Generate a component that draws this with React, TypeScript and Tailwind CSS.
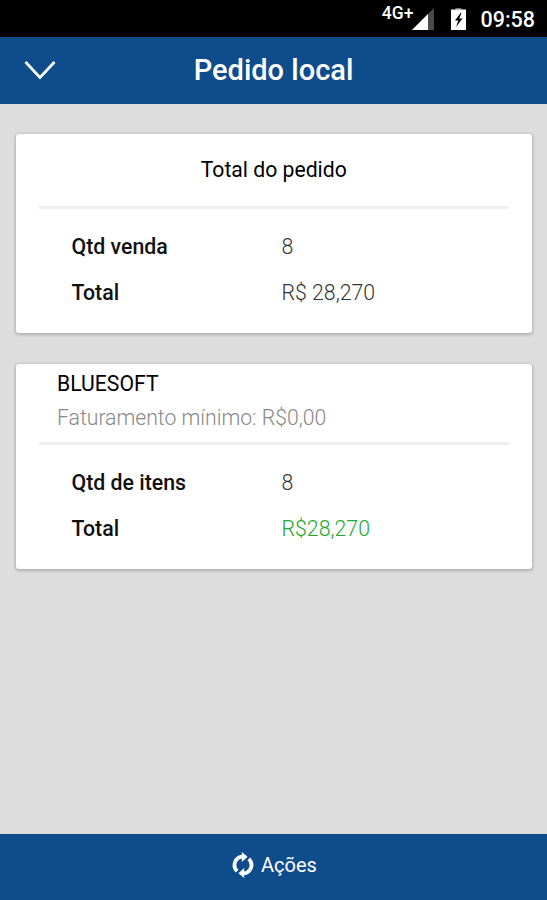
type Row = {
  label: string;
  value: string;
  valueClass: string;
};

const orderRows: Row[] = [
  { label: "Qtd venda", value: "8", valueClass: "text-[#333333]" },
  { label: "Total", value: "R$ 28,270", valueClass: "text-[#333333]" },
];

const supplierRows: Row[] = [
  { label: "Qtd de itens", value: "8", valueClass: "text-[#333333]" },
  { label: "Total", value: "R$28,270", valueClass: "text-[#22a62b]" },
];

function StatusBar() {
  return (
    <div className="flex h-[37px] shrink-0 items-center bg-black pr-3 text-white">
      <span className="ml-auto -mt-[10px] text-[17.5px] leading-none font-medium">4G+</span>
      <svg className="mt-[2px] -ml-[1px]" width="23" height="23" viewBox="0 0 23 23">
        <path d="M0 22 22 0V22Z" fill="#4a4a4a" />
        <path d="M0 22 16 6V22Z" fill="#fff" />
      </svg>
      <svg className="ml-[16px]" width="15" height="22" viewBox="0 0 15 22">
        <path d="M4.5 0H10.5V2H4.5Z" fill="#777" />
        <path d="M0 1.5H15V22H0Z" fill="#fff" />
        <path d="M9.5 5 4 12.5H7.3L5 19 11.5 10.5H8.2L10.5 5Z" fill="#000" />
      </svg>
      <span className="ml-[14px] mt-[2px] text-[21.5px] leading-none font-medium">09:58</span>
    </div>
  );
}

function Rows({ rows }: { rows: Row[] }) {
  return (
    <div className="pt-[15px] pl-[56px]">
      {rows.map((row) => (
        <div key={row.label} className="flex h-[46px] items-center text-[21.3px]">
          <span className="w-[210px] font-medium text-[#111111]">{row.label}</span>
          <span className={`font-light ${row.valueClass}`}>{row.value}</span>
        </div>
      ))}
    </div>
  );
}

function Divider() {
  return <div className="mr-[23px] ml-[23px] h-[3px] bg-[#eeeeee]" />;
}

export default function App() {
  return (
    <main className="flex h-screen w-full flex-col bg-[#dddddd] font-['Roboto',sans-serif]">
      <StatusBar />
      <header className="relative flex h-[67px] shrink-0 items-center justify-center bg-[#0f4c8c] text-white">
        <svg className="absolute top-[23px] left-[24px]" width="32" height="21" viewBox="0 0 32 21" fill="none" stroke="#fff" strokeWidth="2.7">
          <path d="M1.5 2 16 17.5 30.5 2" />
        </svg>
        <h1 className="text-[29px] leading-none font-medium">Pedido local</h1>
      </header>

      <div className="flex grow flex-col gap-[31px] pr-[15px] pl-[15.5px] pt-[30px]">
        {/* Resumo do pedido */}
        <section className="h-[199px] rounded-[3px] bg-white shadow-[0_1px_3px_1px_rgba(0,0,0,0.2)]">
          <div className="flex h-[72px] items-center justify-center text-[21.2px] text-black">
            Total do pedido
          </div>
          <Divider />
          <Rows rows={orderRows} />
        </section>

        {/* Fornecedor */}
        <section className="h-[205px] rounded-[3px] bg-white shadow-[0_1px_3px_1px_rgba(0,0,0,0.2)]">
          <div className="h-[78px] pt-[3px] pl-[41.5px] text-[21.2px]">
            <p className="leading-[34px] text-black">BLUESOFT</p>
            <p className="leading-[33px] font-light text-[#888888]">Faturamento mínimo: R$0,00</p>
          </div>
          <Divider />
          <Rows rows={supplierRows} />
        </section>
      </div>

      <footer className="flex h-[66px] shrink-0 items-center justify-center gap-[7px] bg-[#0f4c8c] pb-[4px] pl-[2px] text-white">
        <svg width="22" height="26" viewBox="0 0 22 26">
          <g fill="none" stroke="#fff" strokeWidth="3.8">
            <path d="M5.2 19.2A8.4 8.4 0 0 1 10.5 4.7" />
            <path d="M16.8 6.8A8.4 8.4 0 0 1 11.5 21.3" />
          </g>
          <path d="M9.8 0 15.6 4.8 9.8 10Z" fill="#fff" />
          <path d="M12.2 26 6.4 21.2 12.2 16Z" fill="#fff" />
        </svg>
        <span className="text-[20px] leading-none">Ações</span>
      </footer>
    </main>
  );
}
